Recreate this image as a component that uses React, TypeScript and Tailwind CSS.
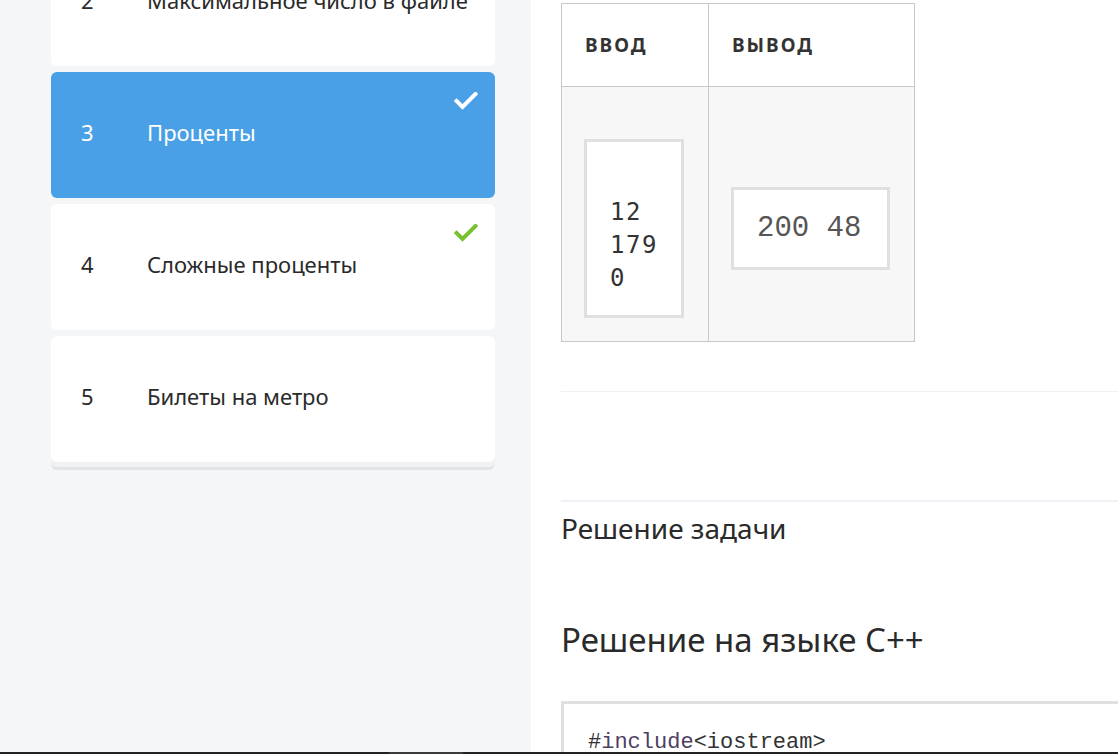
import React from "react";

const sans = { fontFamily: '"Noto Sans", "Open Sans", sans-serif' };

function Check({ color }: { color: string }) {
  return (
    <svg width="24" height="18" viewBox="0 0 24 18" fill="none">
      <polyline points="2.5,9 8.5,15 21.5,2" stroke={color} strokeWidth="4" strokeLinecap="square" />
    </svg>
  );
}

function Card({
  n,
  title,
  active,
  done,
}: {
  n: number;
  title: string;
  active?: boolean;
  done?: boolean;
}) {
  return (
    <div
      className={`relative flex h-[126px] items-center rounded-[6px] pb-[6px] ${
        active ? "bg-[#4aa0e6] text-white" : "bg-white text-[#2a2a2a]"
      }`}
    >
      <span className="w-[96px] shrink-0 pl-[30px] text-[22px]">{n}</span>
      <span className="text-[22px]">{title}</span>
      {done && (
        <div className="absolute right-[17px] top-[20px]">
          <Check color={active ? "#ffffff" : "#78c231"} />
        </div>
      )}
    </div>
  );
}

export default function App() {
  return (
    <div className="flex h-[754px] w-[1118px] flex-col overflow-hidden bg-white" style={sans}>
      <div className="flex min-h-0 flex-1">
        {/* Sidebar */}
        <div className="w-[531px] shrink-0 bg-[#f5f6f8] pl-[51px]">
          <div className="mt-[-60px] flex w-[444px] flex-col gap-[6px]">
            <Card n={2} title="Максимальное число в файле" />
            <Card n={3} title="Проценты" active done />
            <Card n={4} title="Сложные проценты" done />
            <div className="rounded-[6px] border-b-[3px] border-[#e2e4e5] bg-[#eff1f3] pb-[5px]">
              <Card n={5} title="Билеты на метро" />
            </div>
          </div>
        </div>

        {/* Content */}
        <div className="min-w-0 flex-1 overflow-hidden pl-[30px]">
          <table className="mt-[3px] border-collapse text-[#333]">
            <thead>
              <tr>
                <th className="h-[83px] w-[147px] border border-[#c8c8c8] bg-white pl-[23px] text-left align-middle text-[19px] font-bold tracking-[2px]">
                  ВВОД
                </th>
                <th className="w-[206px] border border-[#c8c8c8] bg-white pl-[23px] text-left align-middle text-[19px] font-bold tracking-[2px]">
                  ВЫВОД
                </th>
              </tr>
            </thead>
            <tbody>
              <tr>
                <td className="border border-[#c8c8c8] bg-[#f7f7f7] pb-[23px] pl-[22px] pt-[52px] align-middle">
                  <div
                    className="flex h-[179px] w-[100px] flex-col justify-center border-[3px] border-[#e0e0e0] bg-white pl-[23px] pt-[34px] text-[24px] leading-[33px] tracking-[1.5px] text-[#333]"
                    style={{ fontFamily: '"DejaVu Sans Mono", monospace' }}
                  >
                    <span>12</span>
                    <span>179</span>
                    <span>0</span>
                  </div>
                </td>
                <td className="border border-[#c8c8c8] bg-[#f7f7f7] pb-[23px] pl-[22px] pt-[52px] align-middle">
                  <div
                    className="flex h-[83px] w-[159px] items-center border-[3px] border-[#e0e0e0] bg-white pl-[23px] text-[29px] text-[#555]"
                    style={{ fontFamily: '"Liberation Mono", monospace' }}
                  >
                    200 48
                  </div>
                </td>
              </tr>
            </tbody>
          </table>

          <div className="mt-[49px] h-px bg-[#f1f1f1]" />
          <div className="mt-[108px] h-[2px] bg-[#eef1f5]" />

          <h3 className="mt-[8px] text-[28px] font-normal leading-[36px] text-[#2a2a2a]">Решение задачи</h3>

          <h2 className="mt-[73px] text-[33px] font-normal leading-[42px] text-[#2a2a2a]">Решение на языке C++</h2>

          <div className="mt-[40px] h-[120px] border-[3px] border-r-0 border-[#e0e0e0] bg-white pl-[24px] pt-[25px]">
            <pre
              className="text-[22px] leading-[28px] text-[#333]"
              style={{ fontFamily: '"Liberation Mono", monospace' }}
            >
              #<span className="text-[#4f3f62]">include</span>&lt;iostream&gt;
            </pre>
          </div>
        </div>
      </div>
      <div className="flex h-[2px] shrink-0 bg-[#222]">
        <div className="ml-[389px] w-[74px] bg-[#3a3a3a]" />
      </div>
    </div>
  );
}
